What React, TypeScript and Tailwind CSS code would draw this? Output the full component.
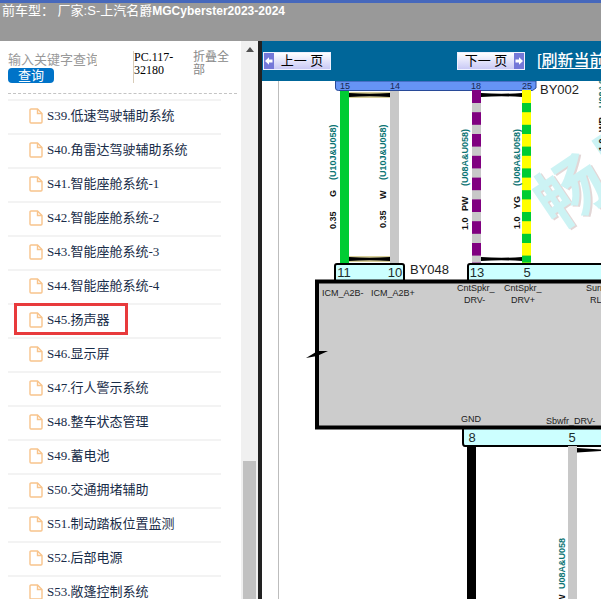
import React, { useState } from 'react';

const menuItems = [
  'S39.低速驾驶辅助系统',
  'S40.角雷达驾驶辅助系统',
  'S41.智能座舱系统-1',
  'S42.智能座舱系统-2',
  'S43.智能座舱系统-3',
  'S44.智能座舱系统-4',
  'S45.扬声器',
  'S46.显示屏',
  'S47.行人警示系统',
  'S48.整车状态管理',
  'S49.蓄电池',
  'S50.交通拥堵辅助',
  'S51.制动踏板位置监测',
  'S52.后部电源',
  'S53.敞篷控制系统',
];

const activeItem = 'S45.扬声器';

const FileIcon = () => (
  <svg className="h-4 w-3.5 shrink-0" viewBox="0 0 14 16" fill="none" stroke="#f8c48c" strokeWidth="1.4" aria-hidden="true">
    <path d="M2 1h6.500l4.500 4.500v8.500a1 1 0 0 1-1 1H2a1 1 0 0 1-1-1V2a1 1 0 0 1 1-1z" />
    <path d="M8.500 1v4.500H13" />
  </svg>
);

const ArrowIcon = ({ flip = false }: { flip?: boolean }) => (
  <svg className="h-full w-2.5 shrink-0" viewBox="0 0 10 17" preserveAspectRatio="none" aria-hidden="true">
    <rect width="10" height="17" fill="#7478d8" />
    <path d={flip ? 'M9 8.5 5 4.5v2.5H1.5v3H5v2.5z' : 'M1 8.5l4-4v2.5h3.5v3H5v2.5z'} fill="#fff" />
  </svg>
);

const Sidebar = () => {
  const [keyword, setKeyword] = useState('');

  return (
    <aside className="flex w-[258px] shrink-0 overflow-hidden bg-white">
      <div className="min-w-0 flex-1 pl-2 font-['Liberation_Serif','Noto_Sans_CJK_SC',serif]">
        <div className="mr-1 flex h-[53px] items-start border-b border-dashed border-[#c4c4c4] pt-2.5">
          <form className="w-[125px] shrink-0" onSubmit={(e) => e.preventDefault()}>
            <input
              type="text"
              aria-label="输入关键字查询"
              placeholder="输入关键字查询"
              value={keyword}
              onChange={(e) => setKeyword(e.target.value)}
              className="block h-[17px] w-[89px] text-[13px] leading-4 outline-none placeholder:text-[#999]"
            />
            <button type="submit" className="block h-[15px] w-[46px] rounded bg-[#0073c8] text-[13px] leading-[14px] text-white">
              查询
            </button>
          </form>
          <div className="h-8 w-[60px] shrink-0 border-l border-[#d8ccb8] text-xs leading-[13px] text-black">
            PC.117-
            <br />
            32180
          </div>
          <button type="button" className="w-9 text-left text-xs leading-[13px] text-[#888]">
            折叠全部
          </button>
        </div>

        {/* Системы автомобиля */}
        <ul className="mr-5 mt-[5px]">
          {menuItems.map((item) => (
            <li key={item} className="h-[34px] border-t-2 border-[#f3f3f3]">
              <a
                href="#diagram"
                className={`-mt-0.5 ml-1.5 inline-flex h-8 items-center gap-1 border-[3px] pt-0.5 pl-3 pr-4 align-top text-[13px] leading-4 whitespace-nowrap text-[#182c48] ${
                  item === activeItem ? 'border-[#e83a3c]' : 'border-transparent'
                }`}
              >
                <FileIcon />
                {item}
              </a>
            </li>
          ))}
        </ul>
      </div>

      {/* Полоса прокрутки */}
      <div className="flex w-[17px] shrink-0 flex-col items-center bg-[#f0f0f0]">
        <svg className="mt-1.5 h-[5px] w-2" viewBox="0 0 8 5" aria-hidden="true">
          <path d="M4 0l4 5H0z" fill="#505050" />
        </svg>
        <div className="mt-[409px] w-[13px] flex-1 bg-[#c1c1c1]" />
      </div>
    </aside>
  );
};

// Полосатый провод: основной цвет и цвет меток
const StripedWire = ({ x, base, mark }: { x: number; base: string; mark: string }) => (
  <g>
    <rect x={x} y="90" width="9" height="173" fill={base} />
    {[0, 1, 2, 3, 4, 5, 6, 7].map((i) => (
      <rect key={i} x={x} y={103 + i * 21.8} width="9" height={i === 7 ? 7 : 9.2} fill={mark} />
    ))}
  </g>
);

const VText = ({ x, y, fill = '#111', children }: { x: number; y: number; fill?: string; children: React.ReactNode }) => (
  <text transform={`translate(${x} ${y}) rotate(-90)`} fontSize="9" fontWeight="bold" fill={fill}>
    {children}
  </text>
);

const Link = ({ x, y, w }: { x: number; y: number; w: number }) => (
  <path d={`M${x} ${y - 2}q${w / 2} 1.5 ${w} 0v4q${-w / 2} -1.5 ${-w} 0z`} fill="#000" />
);

const Diagram = () => (
  <svg
    id="diagram"
    className="block h-[518px] w-[339px] shrink-0 font-['Liberation_Sans','Noto_Sans_CJK_SC',sans-serif]"
    viewBox="262 81 339 518"
    role="img"
    aria-label="BY002 / BY048"
  >
    <path d="M278.5 81v518" stroke="#bdbdbd" />

    {/* Водяной знак */}
    <g fontSize="68" fontWeight="bold">
      <text transform="translate(558 232) rotate(-34)" fill="#e2d6d6">
        畅易
      </text>
      <text transform="translate(556 231) rotate(-34)" fill="#ccf3f4">
        畅易
      </text>
    </g>

    <path d="M335.5 81v7q0 2.500 3 2.500h194l3.500-2.500v-7z" fill="#6694f5" stroke="#284a98" />
    <g fontSize="9" fill="#182850" textAnchor="middle">
      <text x="345" y="89">15</text>
      <text x="395" y="89">14</text>
      <text x="476" y="89">18</text>
      <text x="527" y="89">25</text>
    </g>
    <text x="540" y="94" fontSize="13" fill="#222">BY002</text>

    <g fill="#d8d09a">
      <rect x="349" y="92" width="41" height="6" />
      <rect x="349" y="256" width="41" height="6" />
    </g>
    <Link x={349} y={95} w={41} />
    <Link x={349} y={259} w={41} />
    <Link x={481} y={95} w={41} />
    <Link x={481} y={259} w={41} />

    <rect x="340" y="91" width="9" height="172" fill="#00cc33" />
    <rect x="390" y="91" width="9" height="172" fill="#c8c8c8" />
    <StripedWire x={472} base="#800080" mark="#c8c8c8" />
    <StripedWire x={522} base="#ffff00" mark="#00cc33" />

    <VText x={336} y={180} fill="#0c7474">(U10J&amp;U058)</VText>
    <VText x={336} y={197}>G</VText>
    <VText x={336} y={229}>0.35</VText>
    <VText x={386} y={180} fill="#0c7474">(U10J&amp;U058)</VText>
    <VText x={386} y={199}>W</VText>
    <VText x={386} y={228}>0.35</VText>
    <VText x={468} y={186} fill="#0c7474">(U08A&amp;U058)</VText>
    <VText x={468} y={211}>PW</VText>
    <VText x={468} y={230}>1.0</VText>
    <VText x={520} y={186} fill="#0c7474">(U08A&amp;U058)</VText>
    <VText x={520} y={209}>YG</VText>
    <VText x={520} y={229}>1.0</VText>
    <VText x={605} y={108} fill="#0c7474">U08A&amp;U058</VText>
    <VText x={605} y={132}>WR</VText>
    <VText x={605} y={151}>1.0</VText>

    <g fill="#ccffff" stroke="#000" strokeWidth="2">
      <path d="M335 281v-15q0-2 2-2h65q2 0 2 2v15" />
      <path d="M468 281v-15q0-2 2-2h140v17" />
      <path d="M463 428v15q0 3 2 3h145v-18" />
    </g>
    <rect x="317" y="281.500" width="300" height="146" fill="#ccc" stroke="#000" strokeWidth="4" />
    <path d="M306 358l10-6v-1l12 0-11 5z" fill="#000" />

    <g fontSize="13" fill="#1c2c2c" textAnchor="middle">
      <text x="344" y="277">11</text>
      <text x="395" y="277">10</text>
      <text x="477" y="277">13</text>
      <text x="527" y="277">5</text>
      <text x="472" y="442">8</text>
      <text x="572" y="442">5</text>
    </g>
    <text x="410" y="274" fontSize="13" fill="#222">BY048</text>
    <g fontSize="9" fill="#222">
      <text x="322" y="296">ICM_A2B-</text>
      <text x="371" y="296">ICM_A2B+</text>
      <text x="457" y="291">CntSpkr_</text>
      <text x="464" y="303">DRV-</text>
      <text x="504" y="291">CntSpkr_</text>
      <text x="511" y="303">DRV+</text>
      <text x="586" y="291">Surr_</text>
      <text x="590" y="303">RL+</text>
      <text x="461" y="422">GND</text>
      <text x="546" y="424">Sbwfr_DRV-</text>
    </g>

    <rect x="467" y="446" width="9" height="153" fill="#000" />
    <rect x="568" y="446" width="9" height="153" fill="#c8c8c8" />
    <path d="M577 448l24 1.500v1.500l-24 1.500z" fill="#000" />
    <VText x={565} y={589} fill="#0c7474">U08A&amp;U058</VText>
    <VText x={565} y={603}>W</VText>
  </svg>
);

const pagerButton =
  'flex h-[18px] w-[68px] items-center overflow-hidden border border-[#eef0ff] bg-linear-to-b from-white to-[#c9c9f5] text-[13px] leading-4 text-black';

const Toolbar = () => (
  <nav className="flex h-10 shrink-0 items-center overflow-hidden bg-[#006699] pl-px font-['Liberation_Sans','Noto_Sans_CJK_SC',sans-serif] whitespace-nowrap">
    <button type="button" className={`${pagerButton} mr-[126px] shrink-0`}>
      <ArrowIcon />
      <span className="flex-1">上一 页</span>
    </button>
    <button type="button" className={`${pagerButton} mr-3 shrink-0`}>
      <span className="flex-1">下一 页</span>
      <ArrowIcon flip />
    </button>
    <a href="#diagram" className="shrink-0 text-base font-medium text-white underline decoration-1 underline-offset-2">
      [刷新当前
    </a>
  </nav>
);

export default function App() {
  return (
    <div className="flex h-screen flex-col overflow-hidden bg-white">
      <header className="h-[41px] shrink-0 overflow-hidden border-t-[3px] border-[#4668bc] bg-[#999] pl-0.5 font-['Liberation_Sans','Noto_Sans_CJK_SC',sans-serif] text-[13px] leading-4 whitespace-nowrap text-white">
        前车型： 厂家:S-上汽名爵<b className="text-xs leading-4">MGCyberster2023-2024</b>
      </header>
      <div className="flex min-h-0 flex-1">
        <Sidebar />
        <main className="flex min-w-0 flex-1 flex-col overflow-hidden border-l-4 border-[#222]">
          <Toolbar />
          <Diagram />
        </main>
      </div>
    </div>
  );
}
